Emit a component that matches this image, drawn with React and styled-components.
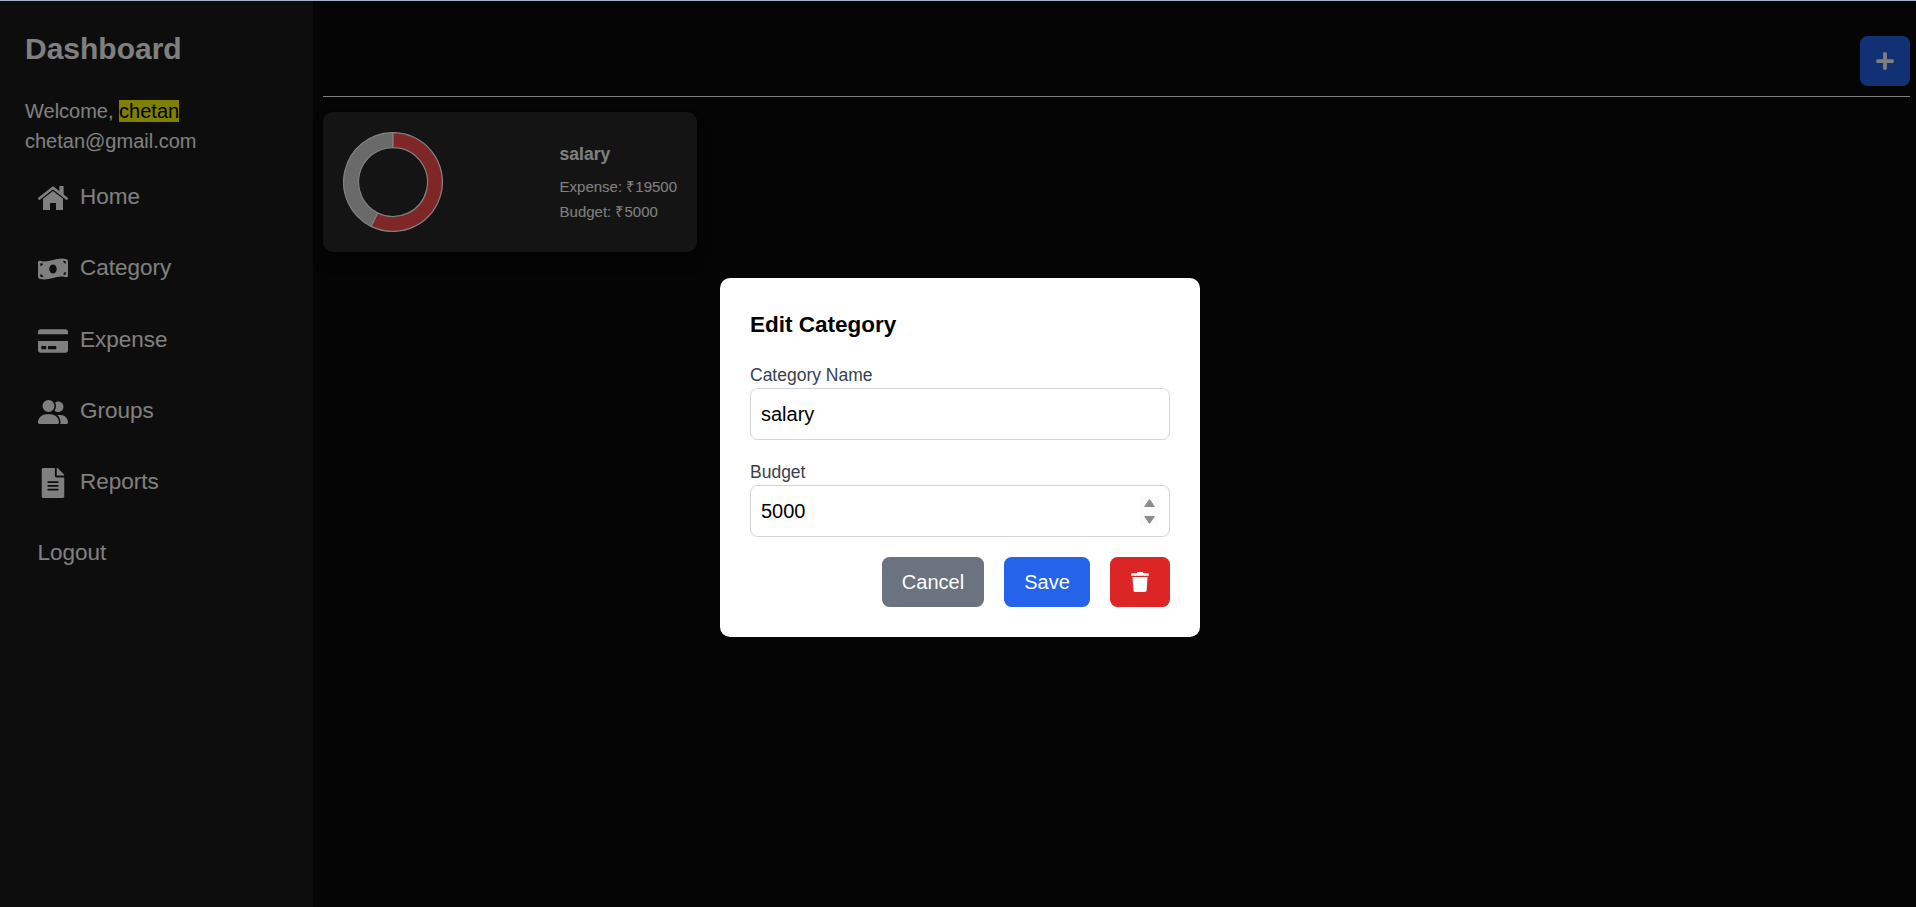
import React from "react";
import styled, { createGlobalStyle } from "styled-components";
import {
  FaMoneyBillWave,
  FaCreditCard,
  FaFileAlt,
  FaPlus,
  FaTrash,
} from "react-icons/fa";
import { FaUserGroup } from "react-icons/fa6";

const GlobalStyle = createGlobalStyle`
  * { box-sizing: border-box; }
  html, body { margin: 0; padding: 0; height: 100%; overflow: hidden; }
  body {
    background: #0a0a0a;
    font-family: "Liberation Sans", Arial, Helvetica, sans-serif;
    font-size: 20px;
    line-height: 30px;
  }
  button, input { font-family: inherit; }
  h1, h2, h3, p, ul { margin: 0; padding: 0; }
`;

const Page = styled.div`
  display: flex;
  height: 907px;
  width: 1916px;
  border-top: 1px solid #a3b1cc;
  color: #fff;
`;

const Sidebar = styled.aside`
  width: 313px;
  flex: none;
  background: #1a1a1a;
  padding: 28px 25px 0;
`;

const SidebarTitle = styled.h1`
  font-size: 30px;
  line-height: 40px;
  font-weight: 700;
  margin-bottom: 27px;
`;

const Highlight = styled.mark`
  background: #ff0;
  color: #000;
`;

const Nav = styled.ul`
  list-style: none;
  margin-top: 5.5px;
`;

const NavItem = styled.li`
  display: flex;
  align-items: center;
  gap: 12.5px;
  height: 71.25px;
  padding-left: 12.5px;
  font-size: 22.5px;

  svg {
    width: 30px;
    height: 30px;
    margin-top: 2px;
  }
`;

const Main = styled.main`
  flex: 1;
  padding: 35px 6px 0 10px;
`;

const Toolbar = styled.header`
  display: flex;
  justify-content: flex-end;
  padding-bottom: 10px;
  border-bottom: 1px solid #fff;
`;

const AddButton = styled.button`
  display: flex;
  align-items: center;
  justify-content: center;
  width: 50px;
  height: 50px;
  border: 0;
  border-radius: 7.5px;
  background: #2563eb;
  color: #fff;
  font-size: 20px;
`;

const CategoryCard = styled.section`
  display: flex;
  align-items: center;
  justify-content: space-between;
  width: 374px;
  height: 140px;
  margin-top: 15px;
  padding: 20px;
  border-radius: 10px;
  background: #292929;
  box-shadow: 0 10px 15px rgba(0, 0, 0, 0.2);
`;

const CardTitle = styled.h3`
  font-size: 17.5px;
  line-height: 28px;
  margin-bottom: 6px;
`;

const CardLine = styled.p`
  font-size: 15px;
  line-height: 25px;
`;

const Overlay = styled.div`
  position: fixed;
  inset: 1px 0 0;
  display: flex;
  align-items: center;
  justify-content: center;
  padding: 7px 0 0 4px;
  background: rgba(0, 0, 0, 0.5);
`;

const Modal = styled.div`
  width: 480px;
  padding: 30px;
  border-radius: 10px;
  background: #fff;
  color: #000;
`;

const ModalTitle = styled.h2`
  font-size: 22.5px;
  line-height: 34px;
  margin-bottom: 21px;
`;

const Field = styled.div`
  margin-bottom: 20px;
`;

const Label = styled.label`
  display: block;
  font-size: 17.5px;
  line-height: 25px;
  color: #374151;
`;

const InputBox = styled.div`
  display: flex;
  align-items: center;
  height: 52px;
  padding: 0 10px;
  border: 1px solid #d1d5db;
  border-radius: 7.5px;
`;

const TextInput = styled.input`
  flex: 1;
  min-width: 0;
  height: 30px;
  padding: 0;
  border: 0;
  outline: 0;
  background: transparent;
  color: #000;
  font-size: 20px;
`;

const Spinner = styled.svg`
  display: block;
  width: 19px;
  height: 30px;
  background: #fbfbfb;
`;

const Actions = styled.div`
  display: flex;
  justify-content: flex-end;
  gap: 20px;
`;

const ActionButton = styled.button`
  display: flex;
  align-items: center;
  justify-content: center;
  width: ${(p) => p.$width}px;
  height: 50px;
  padding: ${(p) => (p.$icon ? "0" : "1px 0 0")};
  border: 0;
  border-radius: 7.5px;
  background: ${(p) => p.$color};
  color: #fff;
  font-size: 20px;
`;

function HomeIcon() {
  return (
    <svg viewBox="0 -3 30 30" fill="currentColor">
      <path d="M21.4 0h4.2v8.9l-4.2-3.3z" />
      <path
        d="M1.4 12.5L15 1.8L28.6 12.5"
        fill="none"
        stroke="currentColor"
        strokeWidth="2.7"
        strokeLinecap="round"
        strokeLinejoin="round"
      />
      <path d="M15 4.9L25 12.8V24H18V17H12V24H5V12.8Z" />
    </svg>
  );
}

const NAV = [
  { label: "Home", Icon: HomeIcon },
  { label: "Category", Icon: FaMoneyBillWave },
  { label: "Expense", Icon: FaCreditCard },
  { label: "Groups", Icon: FaUserGroup },
  { label: "Reports", Icon: FaFileAlt },
  { label: "Logout" },
];

function ring(start, end, outer, inner) {
  const at = (deg, r) => {
    const a = (deg * Math.PI) / 180;
    return `${50 + r * Math.sin(a)} ${50 - r * Math.cos(a)}`;
  };
  const large = end - start > 180 ? 1 : 0;
  return `M${at(start, outer)}A${outer} ${outer} 0 ${large} 1 ${at(end, outer)}L${at(end, inner)}A${inner} ${inner} 0 ${large} 0 ${at(start, inner)}Z`;
}

function Donut() {
  return (
    <svg width="100" height="100" viewBox="0 0 100 100" stroke="#fff" strokeWidth="1.25">
      <path d={ring(206.2, 360, 49.4, 34.5)} fill="#d4d4d4" />
      <path d={ring(0, 206.2, 49.4, 34.5)} fill="#ff4d4f" />
    </svg>
  );
}

export default function App() {
  return (
    <>
      <GlobalStyle />
      <Page>
        <Sidebar>
          <SidebarTitle>Dashboard</SidebarTitle>
          <p>
            Welcome, <Highlight>chetan</Highlight>
          </p>
          <p>chetan@gmail.com</p>
          <Nav>
            {NAV.map(({ label, Icon }) => (
              <NavItem key={label}>
                {Icon && <Icon />}
                <span>{label}</span>
              </NavItem>
            ))}
          </Nav>
        </Sidebar>
        <Main>
          <Toolbar>
            <AddButton aria-label="Add category">
              <FaPlus />
            </AddButton>
          </Toolbar>
          <CategoryCard>
            <Donut />
            <div>
              <CardTitle>salary</CardTitle>
              <CardLine>Expense: ₹19500</CardLine>
              <CardLine>Budget: ₹5000</CardLine>
            </div>
          </CategoryCard>
        </Main>
      </Page>
      <Overlay>
        <Modal role="dialog">
          <ModalTitle>Edit Category</ModalTitle>
          <Field>
            <Label htmlFor="name">Category Name</Label>
            <InputBox>
              <TextInput id="name" defaultValue="salary" />
            </InputBox>
          </Field>
          <Field>
            <Label htmlFor="budget">Budget</Label>
            <InputBox>
              <TextInput id="budget" defaultValue="5000" />
              <Spinner viewBox="0 0 19 30" fill="#8b8b8b" stroke="#8b8b8b" strokeLinejoin="round">
                <path d="M9.5 3.5L14.3 10.5H4.7Z" />
                <path d="M9.5 27.5L14.3 20.5H4.7Z" />
              </Spinner>
            </InputBox>
          </Field>
          <Actions>
            <ActionButton $width={102} $color="#6b7280">Cancel</ActionButton>
            <ActionButton $width={86} $color="#2563eb">Save</ActionButton>
            <ActionButton $width={60} $color="#dc2626" $icon aria-label="Delete category">
              <FaTrash />
            </ActionButton>
          </Actions>
        </Modal>
      </Overlay>
    </>
  );
}
